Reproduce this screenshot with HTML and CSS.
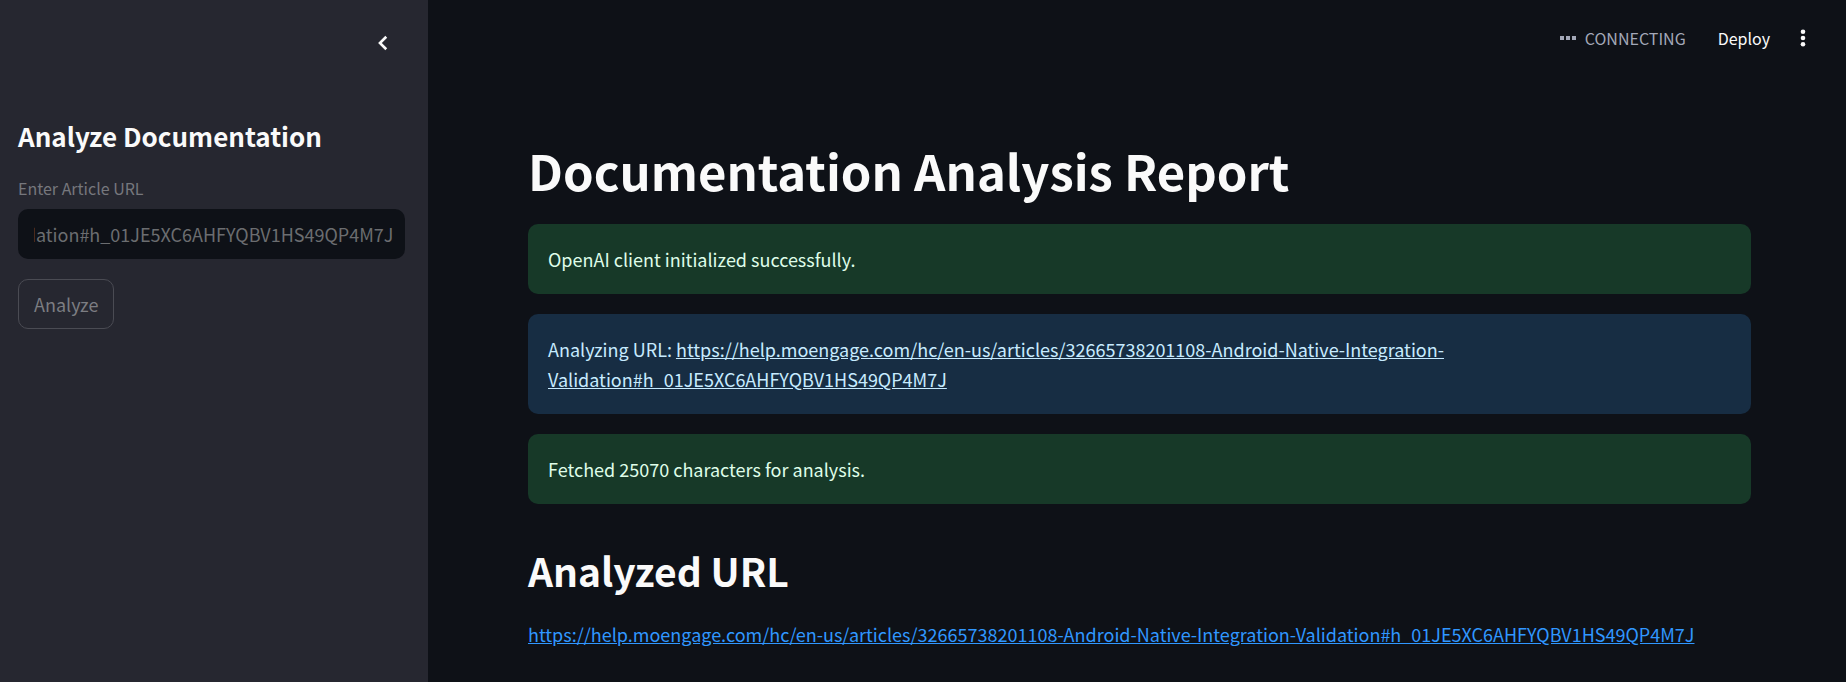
FILE: index.html
```
<!DOCTYPE html>
<html lang="en">
<head>
<meta charset="utf-8">
<title>Documentation Analysis Report</title>
<link rel="stylesheet" href="styles.css">
</head>
<body>
<div class="app">
  <aside class="sidebar">
    <div class="sidebar-header">
      <button class="icon-button" type="button" aria-label="Collapse sidebar">
        <svg class="chevron" viewBox="0 0 24 24" aria-hidden="true"><path d="M15.6 7.4 14 5.8l-6.2 6.2 6.2 6.2 1.6-1.6L11 12z"/></svg>
      </button>
    </div>
    <form class="sidebar-form">
      <h2 class="sidebar-title">Analyze Documentation</h2>
      <label class="field-label" for="article-url">Enter Article URL</label>
      <input class="field-input" id="article-url" type="text" disabled value="https://help.moengage.com/hc/en-us/articles/32665738201108-Android-Native-Integration-Validation#h_01JE5XC6AHFYQBV1HS49QP4M7J">
      <button class="analyze-button" type="submit" disabled>Analyze</button>
    </form>
  </aside>
  <div class="page">
    <header class="toolbar">
      <div class="status">
        <svg class="status-icon" viewBox="0 0 16 6" aria-hidden="true"><path d="M0 1h4v4H0zM6 1h4v4H6zM12 1h4v4h-4z"/></svg>
        <span>CONNECTING</span>
      </div>
      <button class="deploy-button" type="button">Deploy</button>
      <button class="icon-button" type="button" aria-label="Menu">
        <svg class="menu-icon" viewBox="0 0 6 18" aria-hidden="true"><circle cx="3" cy="2.8" r="2.3"/><circle cx="3" cy="9" r="2.3"/><circle cx="3" cy="15.2" r="2.3"/></svg>
      </button>
    </header>
    <main class="content">
      <h1 class="title">Documentation Analysis Report</h1>
      <div class="alerts">
        <p class="alert success">OpenAI client initialized successfully.</p>
        <p class="alert info">Analyzing URL: <a href="https://help.moengage.com/hc/en-us/articles/32665738201108-Android-Native-Integration-Validation#h_01JE5XC6AHFYQBV1HS49QP4M7J">https://help.moengage.com/hc/en-us/articles/32665738201108-Android-Native-Integration-Validation#h_01JE5XC6AHFYQBV1HS49QP4M7J</a></p>
        <p class="alert success">Fetched 25070 characters for analysis.</p>
      </div>
      <h2 class="section-title">Analyzed URL</h2>
      <p class="text"><a class="link" href="https://help.moengage.com/hc/en-us/articles/32665738201108-Android-Native-Integration-Validation#h_01JE5XC6AHFYQBV1HS49QP4M7J">https://help.moengage.com/hc/en-us/articles/32665738201108-Android-Native-Integration-Validation#h_01JE5XC6AHFYQBV1HS49QP4M7J</a></p>
    </main>
  </div>
</div>
<script src="app.js"></script>
</body>
</html>
```
FILE: styles.css
```
* {
  box-sizing: border-box;
}

body {
  margin: 0;
  background: #0e1117;
  color: #fafafa;
  font-family: "Source Sans Pro", "Noto Sans CJK SC", sans-serif;
  font-size: 18px;
  line-height: 30px;
}

h1,
h2,
p {
  margin: 0;
}

button,
input {
  font: inherit;
}

.app {
  display: flex;
  min-height: 100vh;
}

.sidebar {
  flex: none;
  width: 428px;
  background: #262730;
}

.sidebar-header {
  display: flex;
  justify-content: flex-end;
  padding: 28px 30px 0 0;
}

.icon-button {
  display: flex;
  align-items: center;
  justify-content: center;
  width: 30px;
  height: 30px;
  padding: 0;
  border: 0;
  background: none;
  color: #fafafa;
}

.icon-button svg {
  fill: currentColor;
}

.chevron {
  width: 28px;
  height: 28px;
}

.sidebar-form {
  padding: 58px 23px 0 18px;
}

.sidebar-title {
  margin-bottom: 18px;
  font-size: 26px;
  font-weight: 600;
  line-height: 40px;
}

.field-label {
  display: block;
  margin-bottom: 7px;
  color: #76777d;
  font-size: 16px;
  line-height: 28px;
}

.field-input {
  display: block;
  width: 100%;
  height: 50px;
  padding: 0 12px 0 16px;
  border: 0;
  border-radius: 10px;
  background: #0e1117;
  color: #6b6d70;
}

.analyze-button {
  height: 50px;
  margin-top: 20px;
  padding: 0 15px;
  border: 1px solid #4a4b53;
  border-radius: 10px;
  background: none;
  color: #7c7d82;
}

.page {
  flex: 1;
  min-width: 0;
}

.toolbar {
  display: flex;
  align-items: center;
  justify-content: flex-end;
  height: 75px;
  padding-right: 28px;
  font-size: 16px;
}

.status {
  display: flex;
  align-items: center;
  gap: 9px;
  color: #a3a8b8;
}

.status-icon {
  width: 16px;
  height: 6px;
  fill: currentColor;
}

.deploy-button {
  margin: 0 18px 0 32px;
  padding: 0;
  border: 0;
  background: none;
  color: #fafafa;
}

.menu-icon {
  width: 6px;
  height: 18px;
}

.content {
  padding: 62px 95px 20px 100px;
}

.title {
  margin-bottom: 21px;
  font-size: 49px;
  font-weight: 700;
  line-height: 66px;
}

.alerts {
  display: flex;
  flex-direction: column;
  gap: 20px;
}

.alert {
  padding: 20px;
  border-radius: 10px;
}

.alert a {
  color: inherit;
}

.success {
  background: #173928;
  color: #dffde9;
}

.info {
  background: #172d43;
  color: #c7ebff;
}

.section-title {
  margin: 39px 0 22px;
  font-size: 39px;
  font-weight: 600;
  line-height: 54px;
}

.link {
  color: #3097ff;
}
```
FILE: app.js
```
const urlInput = document.getElementById("article-url");
urlInput.scrollLeft = urlInput.scrollWidth;
```
